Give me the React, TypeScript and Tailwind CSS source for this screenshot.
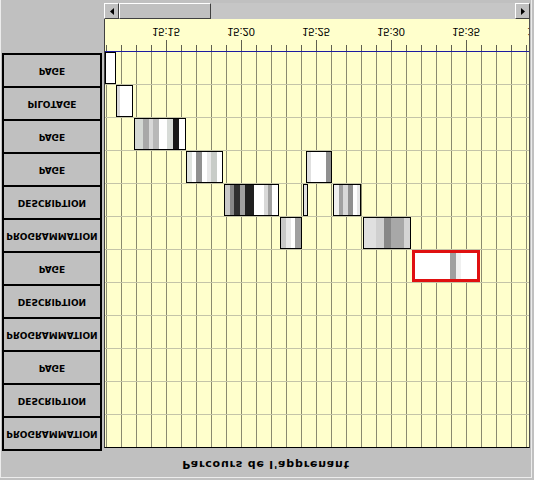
import React from "react";

type Stripe = [string, number];

interface Bar {
  row: number;
  left: number;
  width: number;
  stripes: Stripe[];
  active?: boolean;
}

const LABELS = [
  "PAGE",
  "PILOTAGE",
  "PAGE",
  "PAGE",
  "DESCRIPTION",
  "PROGRAMMATION",
  "PAGE",
  "DESCRIPTION",
  "PROGRAMMATION",
  "PAGE",
  "DESCRIPTION",
  "PROGRAMMATION",
];

// one minute = 15px, x=1 is 15:11
const BARS: Bar[] = [
  { row: 0, left: 0, width: 11, stripes: [["#ffffff", 1]] },
  { row: 1, left: 11, width: 17, stripes: [["#d8d8d8", 3], ["#ffffff", 12]] },
  {
    row: 2,
    left: 29,
    width: 52,
    stripes: [
      ["#d4d8d4", 8],
      ["#a8a8a8", 6],
      ["#d8d8d8", 4],
      ["#b8b8b8", 6],
      ["#ffffff", 8],
      ["#d8dcd8", 6],
      ["#181818", 6],
      ["#ffffff", 6],
    ],
  },
  {
    row: 3,
    left: 81,
    width: 37,
    stripes: [
      ["#e0e4e0", 5],
      ["#ffffff", 4],
      ["#909090", 6],
      ["#ffffff", 5],
      ["#e8e8e8", 4],
      ["#c8ccc8", 6],
      ["#ffffff", 5],
    ],
  },
  {
    row: 4,
    left: 119,
    width: 55,
    stripes: [
      ["#c8c8c8", 5],
      ["#888888", 4],
      ["#303030", 6],
      ["#a0a0a0", 5],
      ["#202020", 9],
      ["#ffffff", 10],
      ["#d8d8d8", 4],
      ["#a0a0a0", 4],
      ["#ffffff", 6],
    ],
  },
  {
    row: 5,
    left: 175,
    width: 22,
    stripes: [
      ["#c8c8c8", 5],
      ["#e8e8e8", 5],
      ["#ffffff", 4],
      ["#a0a0a0", 6],
    ],
  },
  { row: 4, left: 198, width: 5, stripes: [["#e0e0e0", 1]] },
  {
    row: 3,
    left: 201,
    width: 26,
    stripes: [
      ["#e0e0e0", 4],
      ["#ffffff", 15],
      ["#909090", 5],
    ],
  },
  {
    row: 4,
    left: 228,
    width: 28,
    stripes: [
      ["#f0f0f0", 5],
      ["#a0a0a0", 4],
      ["#d8d8d8", 5],
      ["#909090", 5],
      ["#ffffff", 4],
      ["#e8e8e8", 3],
    ],
  },
  {
    row: 5,
    left: 258,
    width: 48,
    stripes: [
      ["#e0e0e0", 12],
      ["#d0d0d0", 8],
      ["#888888", 7],
      ["#a8a8a8", 13],
      ["#d4d4d4", 6],
    ],
  },
  {
    row: 6,
    left: 307,
    width: 68,
    active: true,
    stripes: [
      ["#ffffff", 35],
      ["#a0a0a0", 6],
      ["#f0f0f0", 5],
      ["#ffffff", 16],
    ],
  },
];

const TICKS = Array.from({ length: 30 }, (_, k) => k);

const tickLabel = (k: number) => `15:${String(11 + k).padStart(2, "0")}`;

const ScrollButton = ({ dir }: { dir: "left" | "right" }) => (
  <div className="w-[15px] h-[16px] shrink-0 bg-[#c0c0c0] border-t border-l border-t-white border-l-white border-b border-r border-b-[#404040] border-r-[#404040] flex items-center justify-center">
    <svg width="4" height="7" viewBox="0 0 4 7">
      {dir === "left" ? (
        <polygon points="4,0 4,7 0,3.5" fill="#000" />
      ) : (
        <polygon points="0,0 0,7 4,3.5" fill="#000" />
      )}
    </svg>
  </div>
);

const BarBlock = ({ bar }: { bar: Bar }) => (
  <div
    className={`absolute top-0 h-full flex ${
      bar.active ? "border-[3px] border-[#e01010]" : "border border-black"
    }`}
    style={{ left: bar.left, width: bar.width }}
  >
    {bar.stripes.map(([color, w], i) => (
      <div key={i} className="h-full" style={{ backgroundColor: color, flexGrow: w, flexBasis: 0 }} />
    ))}
  </div>
);

export default function App() {
  return (
    <div className="w-[534px] h-[480px] bg-[#c0c0c0] overflow-hidden">
      <div className="w-[532px] h-[478px] border-l border-r border-b border-[#ececec] flex flex-col pt-[3px]">
        <div className="flex">
          {/* row labels */}
          <div className="ml-[1px] w-[100px] pt-[50px] flex flex-col">
            {LABELS.map((label, i) => (
              <div
                key={i}
                className="h-[33px] border-t-2 border-x-2 border-black bg-[#c0c0c0] flex items-center justify-center"
              >
                <span className="block -scale-y-100 font-['DejaVu_Sans'] font-bold text-[9px] leading-[11px] text-black">
                  {label}
                </span>
              </div>
            ))}
            <div className="h-[2px] bg-black" />
          </div>

          {/* timeline */}
          <div className="ml-[2px] w-[426px] flex flex-col">
            <div className="h-[16px] flex bg-[#c6c6c6]">
              <ScrollButton dir="left" />
              <div className="w-[92px] h-[16px] bg-[#c0c0c0] border-t border-l border-t-white border-l-white border-b border-r border-b-[#404040] border-r-[#404040]" />
              <div className="flex-1" />
              <ScrollButton dir="right" />
            </div>

            <div className="h-[429px] bg-[#ffffcc] border-l border-r border-b border-l-[#404040] border-r-[#505050] border-b-black overflow-hidden flex flex-col">
              <div className="relative h-[32px] shrink-0">
                {TICKS.map((k) => {
                  const major = (k - 4) % 5 === 0;
                  return (
                    <React.Fragment key={k}>
                      <div
                        className={`absolute bottom-0 w-px bg-[#606050] ${major ? "h-[11px]" : "h-[6px]"}`}
                        style={{ left: 1 + k * 15 }}
                      />
                      {major && (
                        <div
                          className="absolute -top-[2px] w-[40px] text-center"
                          style={{ left: 1 + k * 15 - 20 }}
                        >
                          <span className="inline-block -scale-y-100 font-['Liberation_Sans'] text-[11px] leading-[13px] text-black">
                            {tickLabel(k)}
                          </span>
                        </div>
                      )}
                    </React.Fragment>
                  );
                })}
              </div>
              <div className="h-px bg-[#1c1ca0] shrink-0" />

              <div className="relative flex-1">
                {TICKS.map((k) => (
                  <div
                    key={k}
                    className="absolute top-0 bottom-0 w-px bg-[#8a8a70]"
                    style={{ left: 1 + k * 15 }}
                  />
                ))}
                {LABELS.map((_, r) => (
                  <div
                    key={r}
                    className={`relative ${r === 0 ? "h-[32px]" : "h-[33px] border-t border-[#c4c4a8]"}`}
                  >
                    {BARS.filter((b) => b.row === r).map((b, i) => (
                      <BarBlock key={i} bar={b} />
                    ))}
                  </div>
                ))}
              </div>
            </div>
          </div>
        </div>

        <div className="flex-1 flex items-center justify-center">
          <span className="block -scale-y-100 font-['DejaVu_Sans'] font-bold text-[11px] tracking-[0.8px] leading-[14px] text-black">
            Parcours de l'apprenant
          </span>
        </div>
      </div>
    </div>
  );
}
